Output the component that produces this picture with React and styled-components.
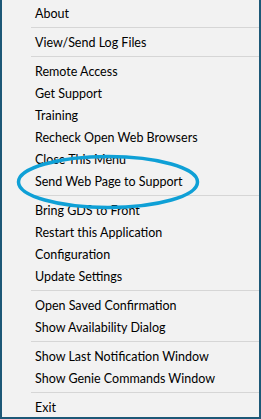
import React from 'react'
import styled, {createGlobalStyle} from 'styled-components'

const GlobalStyle = createGlobalStyle`
  html, body {
    margin: 0;
    padding: 0;
    background: #f2f2f2;
  }
`

// menu groups, a separator sits between each group
const groups = [
  ['About'],
  ['View/Send Log Files'],
  [
    'Remote Access',
    'Get Support',
    'Training',
    'Recheck Open Web Browsers',
    'Close This Menu',
    'Send Web Page to Support',
  ],
  ['Bring GDS to Front', 'Restart this Application', 'Configuration', 'Update Settings'],
  ['Open Saved Confirmation', 'Show Availability Dialog'],
  ['Show Last Notification Window', 'Show Genie Commands Window'],
  ['Exit'],
]

function App() {
  return (
    <>
      <GlobalStyle />
      <Menu>
        {groups.map((group, gi) => (
          <React.Fragment key={gi}>
            {gi > 0 && <Separator />}
            {group.map((label) => (
              <Item key={label}>{label}</Item>
            ))}
          </React.Fragment>
        ))}
        <Highlight viewBox="0 0 186 58" width="186" height="58">
          <ellipse cx="93" cy="29" rx="89.5" ry="25.5" fill="none" stroke="#0fa0d6" strokeWidth="3.5" />
        </Highlight>
      </Menu>
    </>
  )
}

const Menu = styled.div`
  position: relative;
  box-sizing: border-box;
  width: 261px;
  height: 419px;
  padding-top: 2px;
  overflow: hidden;
  background: #f2f2f2;
  border: 2px solid #1d5877;
  border-top: none;
  display: flex;
  flex-direction: column;
  font-family: Lato, "Noto Sans", sans-serif;
  font-size: 12.5px;
  color: #000;
`

const Item = styled.div`
  flex-shrink: 0;
  height: 22px;
  line-height: 23px;
  padding-left: 33px;
  white-space: nowrap;
`

const Separator = styled.div`
  flex-shrink: 0;
  height: 1px;
  margin: 3px 0 3px 29px;
  background: #d6d6d6;
`

const Highlight = styled.svg`
  position: absolute;
  left: 13px;
  top: 153px;
  pointer-events: none;
`

export default App
